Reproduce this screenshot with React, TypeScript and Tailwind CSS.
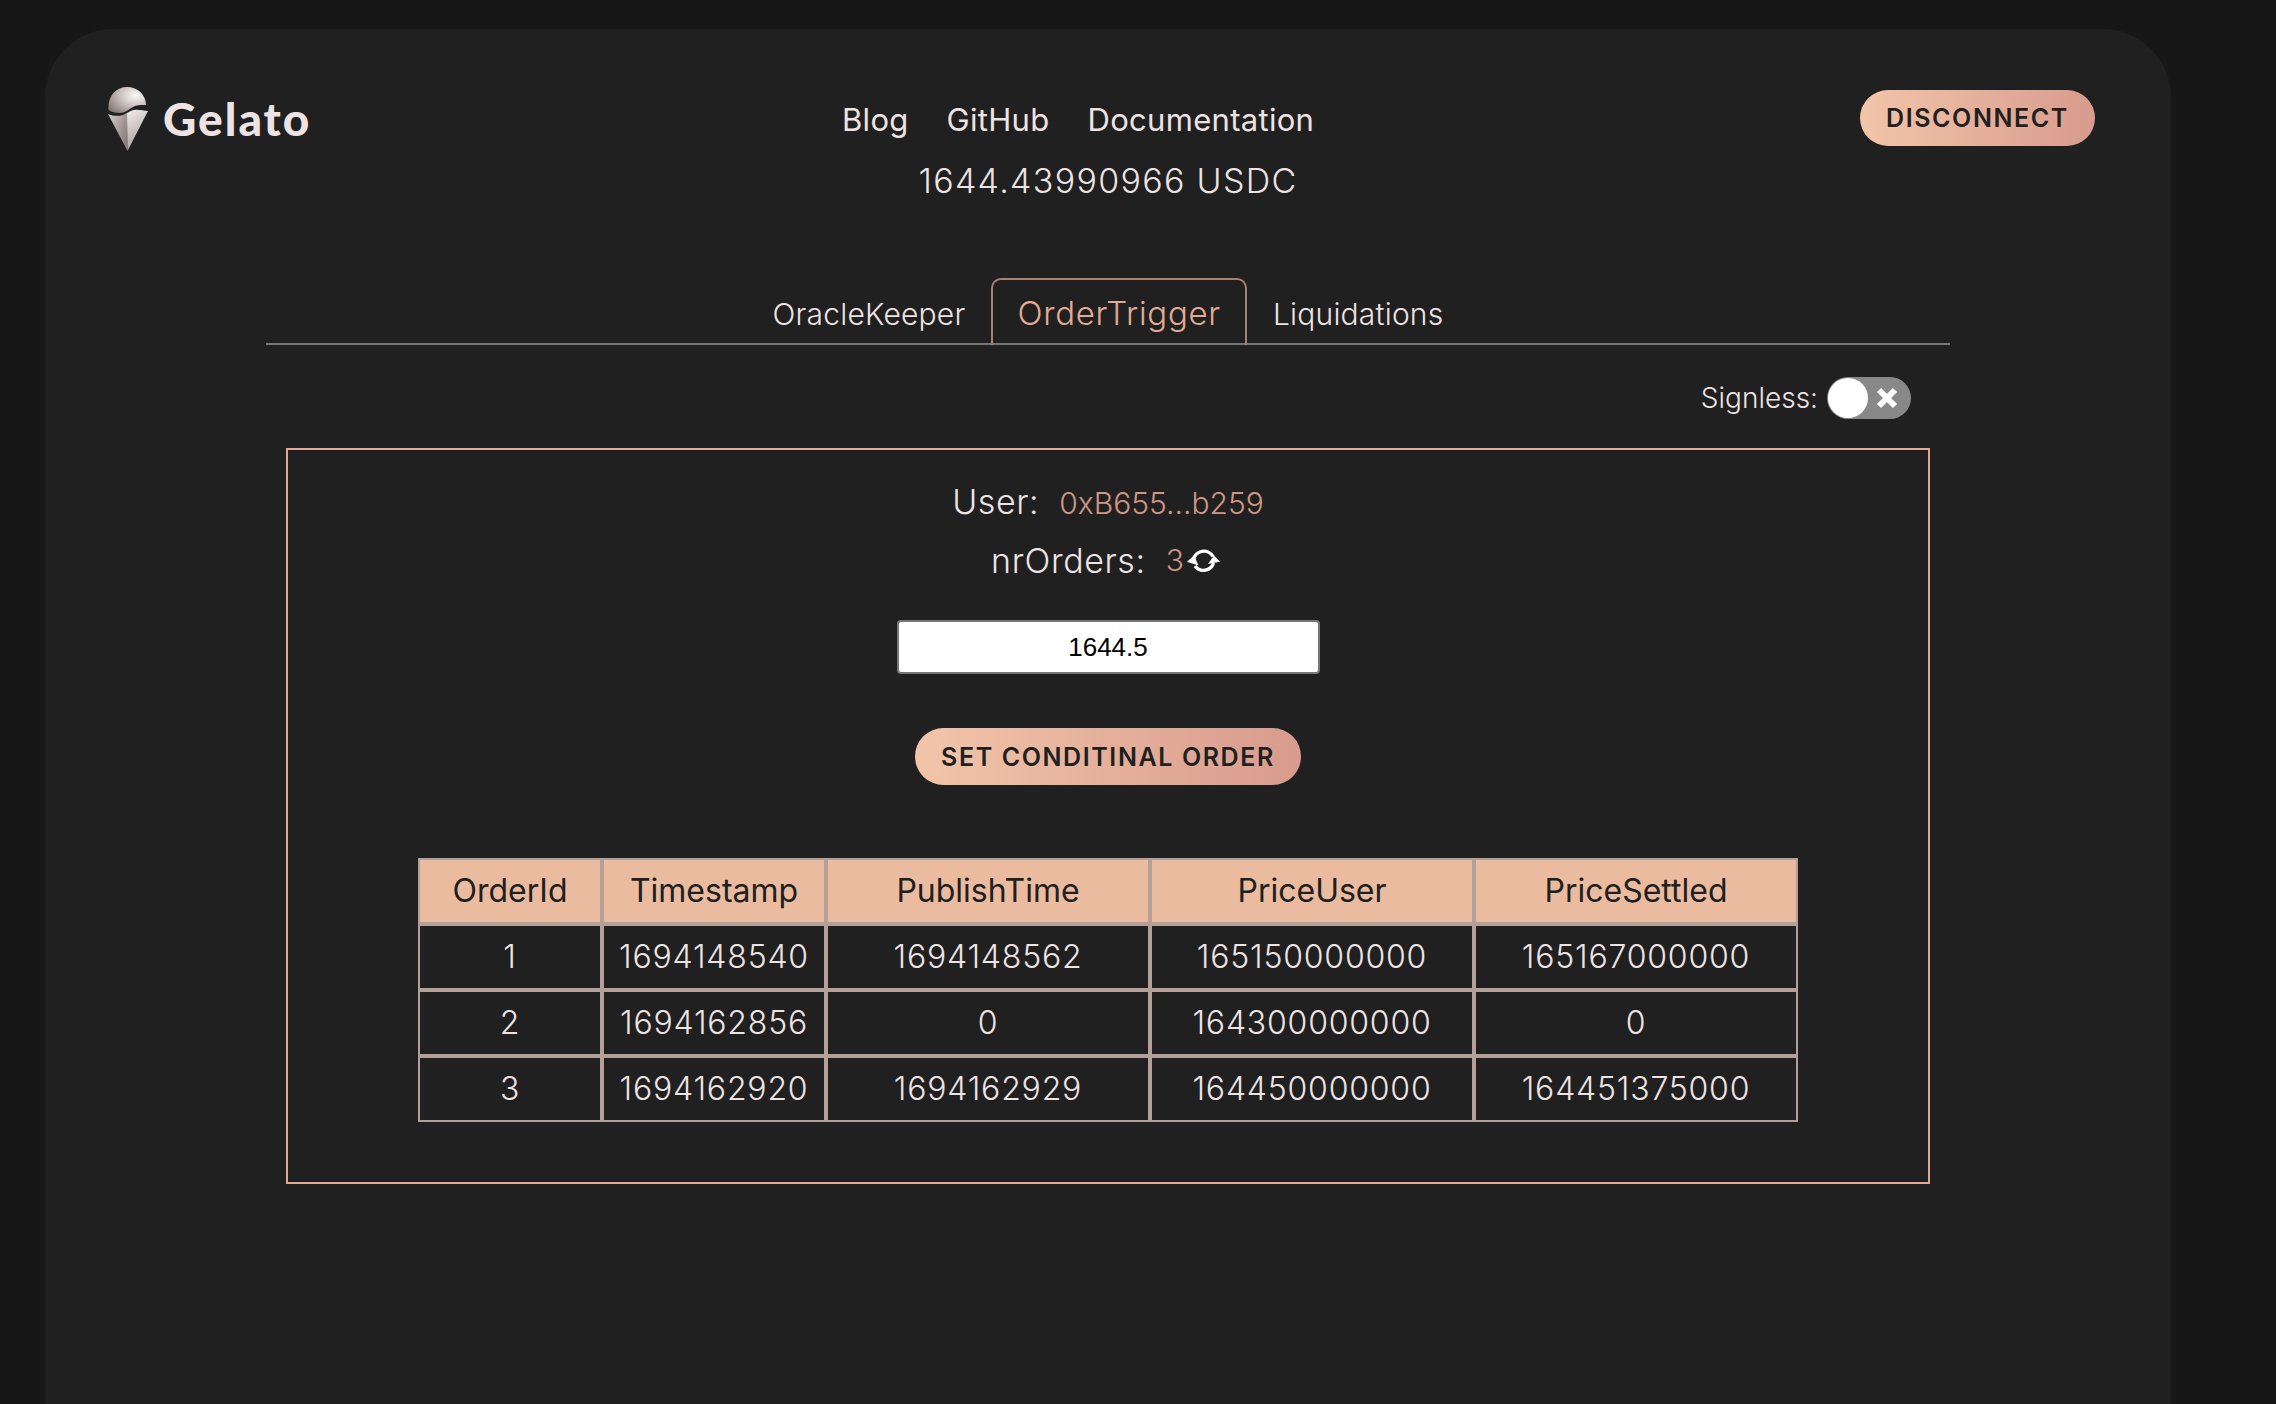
import React from "react";

const cream = "text-[#eee3e3]";
const headers = ["OrderId", "Timestamp", "PublishTime", "PriceUser", "PriceSettled"];
const rows = [
  ["1", "1694148540", "1694148562", "165150000000", "165167000000"],
  ["2", "1694162856", "0", "164300000000", "0"],
  ["3", "1694162920", "1694162929", "164450000000", "164451375000"],
];
const widths = ["w-[184px]", "w-[224px]", "w-[324px]", "w-[324px]", "w-[324px]"];

function Logo() {
  return (
    <svg width="40" height="64" viewBox="0 0 40 64" className="block shrink-0">
      <defs>
        <radialGradient id="dome" cx="0.72" cy="0.32" r="0.85">
          <stop offset="0" stopColor="#fbf8f7" />
          <stop offset="0.45" stopColor="#cfc6c4" />
          <stop offset="1" stopColor="#867b79" />
        </radialGradient>
        <linearGradient id="coneL" x1="0" y1="0" x2="1" y2="0.6">
          <stop offset="0" stopColor="#d5cccb" />
          <stop offset="1" stopColor="#8c7f7d" />
        </linearGradient>
        <linearGradient id="coneR" x1="0" y1="0" x2="0.3" y2="1">
          <stop offset="0" stopColor="#f3eded" />
          <stop offset="1" stopColor="#a99d9b" />
        </linearGradient>
      </defs>
      <path d="M0.5 23 C-0.5 9 8 0 19 0 C30 0 38 8 38 18 C32 18 29 18 25 20 C20 23 16 26 12 26 C7 26 3 25 0.5 23 Z" fill="url(#dome)" />
      <path d="M0 27 C4 29 10 29 13 28.5 C15 28 17 27 19 26 L19.5 64 Z" fill="url(#coneL)" />
      <path d="M19 26 C21 25 23 23.5 26 23 C30 22 35 23.5 40 24 L19.5 64 Z" fill="url(#coneR)" />
    </svg>
  );
}

function GradientButton({ children, className }: { children: React.ReactNode; className: string }) {
  return (
    <button
      className={`flex items-center justify-center rounded-full bg-gradient-to-r from-[#f2c5a9] to-[#d89b8d] pt-[2px] text-[#202020] font-semibold uppercase ${className}`}
    >
      {children}
    </button>
  );
}

export default function App() {
  return (
    <div className="h-[1404px] overflow-hidden bg-[#171717] pt-[29px] pl-[45px] font-['Inter',sans-serif]">
      <div className={`w-[2126px] h-[1500px] rounded-[68px] bg-[#202020] pt-[58px] ${cream}`}>
        <header className="flex h-[64px] items-center pl-[63px] pr-[76px]">
          <div className="flex w-[734px] items-center">
            <Logo />
            <span className="ml-[15px] font-['Lato',sans-serif] text-[46px] leading-none font-black tracking-[2px] text-[#eee3e3]">
              Gelato
            </span>
          </div>
          <nav className="flex items-center gap-[38px] text-[31px] leading-none font-normal tracking-[0.3px]">
            <a>Blog</a>
            <a>GitHub</a>
            <a>Documentation</a>
          </nav>
          <GradientButton className="ml-auto -mt-[2px] h-[56px] w-[235px] text-[25px] tracking-[1.6px]">
            Disconnect
          </GradientButton>
        </header>

        <div className="mt-[9px] pt-[1px] text-center text-[34px] leading-[40px] font-light tracking-[1.3px]">
          1644.43990966 USDC
        </div>

        <div className="mx-[221px] mt-[77px] flex h-[67px] items-end justify-center border-b-2 border-[#777777]">
          <div className="px-[26px] pb-[9px] text-[30px] leading-[40px] font-light tracking-[0.2px]">OracleKeeper</div>
          <div className="-mb-[2px] h-[67px] rounded-t-[10px] border-2 border-b-0 border-[#a9816f] px-[24px] pt-[13px] text-[33px] leading-[40px] font-light tracking-[0.7px] text-[#e3ab93]">
            OrderTrigger
          </div>
          <div className="px-[26px] pb-[9px] text-[30px] leading-[40px] font-light tracking-[0.2px]">Liquidations</div>
        </div>

        <div className="mx-[221px] mt-[32px] flex h-[42px] items-center justify-end pr-[39px]">
          <span className="mr-[9px] text-[28px] leading-none font-light">Signless:</span>
          <div className="relative flex h-[42px] w-[84px] items-center justify-end rounded-full bg-[#888888] pr-[13px]">
            <div className="absolute left-[1px] top-[1px] h-[40px] w-[40px] rounded-full bg-white" />
            <svg width="22" height="22" viewBox="0 0 22 22">
              <path d="M3 3 L19 19 M19 3 L3 19" stroke="#ffffff" strokeWidth="6" />
            </svg>
          </div>
        </div>

        <section className="mx-[241px] mt-[29px] flex flex-col items-center border-2 border-[#e4a996] pt-[30px] pb-[60px]">
          <div className="flex h-[40px] items-center">
            <span className="pt-[2px] text-[34px] font-light tracking-[0.6px]">User:</span>
            <span className="ml-[20px] pt-[6px] text-[30px] font-light text-[#cf9684]">0xB655...b259</span>
          </div>
          <div className="mt-[20px] flex h-[40px] items-center pr-[5px]">
            <span className="text-[34px] font-light tracking-[0.6px]">nrOrders:</span>
            <span className="ml-[20px] text-[30px] font-light text-[#cf9684]">3</span>
            <svg width="33" height="24" viewBox="0 0 33 24" className="ml-[3px] mt-[2px]" fill="none">
              <path d="M6.5 11 A10.5 10.5 0 0 1 26 7.5" stroke="#ffffff" strokeWidth="3.4" />
              <path d="M0 12.7 L7 6.5 L11.5 16.5 Z" fill="#ffffff" />
              <path d="M26.5 14 A10.5 10.5 0 0 1 8 17" stroke="#ffffff" strokeWidth="3.4" />
              <path d="M33 12.7 L27 6.5 L21 15 Z" fill="#ffffff" />
            </svg>
          </div>
          <input
            readOnly
            value="1644.5"
            className="mt-[40px] h-[54px] w-[423px] rounded-[4px] border-2 border-[#767676] bg-white text-center font-['Liberation_Sans',sans-serif] text-[26px] text-black outline-none"
          />
          <GradientButton className="mt-[54px] h-[57px] w-[386px] text-[25px] tracking-[1.6px]">
            Set conditinal order
          </GradientButton>
          <table className="mt-[73px] w-[1380px] table-fixed border-separate border-spacing-0 text-[32px] font-light">
            <thead>
              <tr>
                {headers.map((h, i) => (
                  <th
                    key={h}
                    className={`${widths[i]} h-[66px] border-2 border-[#b3a199] bg-[#ebbb9f] p-0 text-center font-normal text-[#202020]`}
                  >
                    {h}
                  </th>
                ))}
              </tr>
            </thead>
            <tbody className="tracking-[0.8px]">
              {rows.map((r) => (
                <tr key={r[0]}>
                  {r.map((c, i) => (
                    <td key={i} className="h-[66px] border-2 border-[#b3a199] p-0 text-center">
                      {c}
                    </td>
                  ))}
                </tr>
              ))}
            </tbody>
          </table>
        </section>
      </div>
    </div>
  );
}
